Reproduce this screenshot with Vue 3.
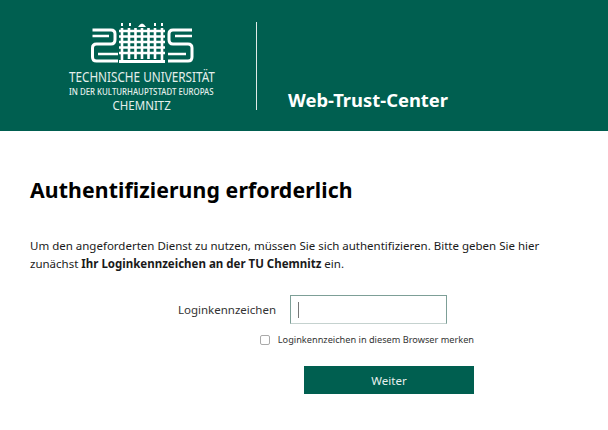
<script setup>
const title = 'Authentifizierung erforderlich'
</script>

<template>
  <div class="page">
    <header class="head">
      <div class="brand">
        <svg class="mark" width="108" height="44" viewBox="0 0 108 44" fill="none" stroke="#fff">
          <path stroke-width="3" d="M4.500 10H23Q27 10 27 14V19.500Q27 24 23 24H8.500Q4.500 24 4.500 28V37Q4.500 41 8.500 41H30" />
          <path stroke-width="2.400" d="M4.500 16H21M10 34H30" />
          <path stroke-width="3" d="M104 10H85Q81 10 81 14V19.500Q81 24 85 24H100Q104 24 104 28V37Q104 41 100 41H80" />
          <path stroke-width="2.400" d="M104 16H87M80 34H98" />
          <path stroke-width="2.600" d="M34 8V42M41 8V39M47.500 8V39M54 8V39M60.500 8V39M67 8V39M74 8V42" />
          <path stroke-width="2.400" d="M31 11H77M31 16.500H77M31 22H77M31 27.500H77M31 33H77" />
          <path stroke-width="3" d="M31 41.500H77" />
          <path stroke-width="0" fill="#fff" d="M50 7Q54 0 58 7ZM33 3h2v3h-2zM41 3h2v3h-2zM66 3h2v3h-2zM73 3h2v3h-2z" />
        </svg>
        <div class="uni">TECHNISCHE UNIVERSITÄT</div>
        <div class="sub">IN DER KULTURHAUPTSTADT EUROPAS</div>
        <div class="city">CHEMNITZ</div>
      </div>
      <div class="rule"></div>
      <div class="service">Web-Trust-Center</div>
    </header>
    <main class="body">
      <h1>{{ title }}</h1>
      <p>Um den angeforderten Dienst zu nutzen, müssen Sie sich authentifizieren. Bitte geben Sie hier zunächst <b>Ihr Loginkennzeichen an der TU Chemnitz</b> ein.</p>
      <form class="form" @submit.prevent>
        <div class="row">
          <label for="login">Loginkennzeichen</label>
          <div class="field"><span class="caret"></span></div>
        </div>
        <div class="remember">
          <span class="box"></span>
          <span>Loginkennzeichen in diesem Browser merken</span>
        </div>
        <button type="submit">Weiter</button>
      </form>
    </main>
  </div>
</template>

<style scoped>
.page { width: 608px; height: 430px; overflow: hidden; background: #fff; font-family: "Noto Sans", sans-serif; color: #1a1a1a; }
.head { height: 131px; background: #005f50; color: #fff; display: flex; box-sizing: border-box; padding-top: 22px; }
.brand { width: 147px; margin-left: 68px; display: flex; flex-direction: column; align-items: center; }
.mark { margin-top: -2px; margin-bottom: 6px; flex: none; }
.uni { font-size: 13.500px; line-height: 15px; white-space: nowrap; transform: scaleX(.87); color: #e4efec; }
.sub { font-size: 8.200px; line-height: 13px; white-space: nowrap; font-weight: 500; transform: scaleX(.96); color: #e4efec; }
.city { font-size: 12.500px; line-height: 15px; transform: scaleX(.92); color: #e4efec; }
.rule { width: 1px; height: 88px; background: #dfeae7; margin-left: 41px; }
.service { margin-left: 31px; margin-top: 65px; font-size: 18.400px; line-height: 25px; font-weight: 700; }
.body { padding: 45px 30px 0; }
h1 { margin: 0; font-size: 21.250px; line-height: 28px; font-weight: 700; color: #000; letter-spacing: .1px; }
p { margin: 33px 0 0; font-size: 11.500px; line-height: 17.500px; width: 530px; }
.form { width: 444px; display: flex; flex-direction: column; align-items: flex-end; margin-top: 23px; }
.row { display: flex; align-items: center; width: 100%; justify-content: flex-end; padding-right: 27px; box-sizing: border-box; }
label { font-size: 11.500px; margin-right: 14px; color: #333; }
.field { width: 157px; height: 29px; border: 1px solid #7d9f97; border-bottom-color: #c5d2cf; display: flex; align-items: center; padding-left: 7px; box-sizing: border-box; }
.caret { width: 1px; height: 16px; background: #777; }
.remember { display: flex; align-items: center; gap: 8px; width: 100%; justify-content: flex-end; margin-top: 9px; font-size: 9.200px; line-height: 14px; color: #333; }
.box { width: 8px; height: 8px; border: 1px solid #aaa; border-radius: 2px; }
button { width: 170px; height: 28px; margin-top: 19px; border: 0; background: #005f50; color: #e8f0ee; font: 11.500px "Noto Sans", sans-serif; padding: 0; }
</style>
